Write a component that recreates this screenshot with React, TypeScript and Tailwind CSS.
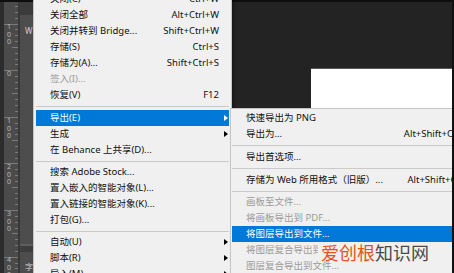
import React from 'react';
import clsx from 'clsx';

type Item =
  | { sep: number }
  | { label: string; keys?: string; arrow?: boolean; disabled?: boolean; active?: boolean };

const fileMenu: Item[] = [
  { label: '关闭(C)', keys: 'Ctrl+W' },
  { label: '关闭全部', keys: 'Alt+Ctrl+W' },
  { label: '关闭并转到 Bridge...', keys: 'Shift+Ctrl+W' },
  { label: '存储(S)', keys: 'Ctrl+S' },
  { label: '存储为(A)...', keys: 'Shift+Ctrl+S' },
  { label: '签入(I)...', disabled: true },
  { label: '恢复(V)', keys: 'F12' },
  { sep: 7 },
  { label: '导出(E)', arrow: true, active: true },
  { label: '生成', arrow: true },
  { label: '在 Behance 上共享(D)...' },
  { sep: 6 },
  { label: '搜索 Adobe Stock...' },
  { label: '置入嵌入的智能对象(L)...' },
  { label: '置入链接的智能对象(K)...' },
  { label: '打包(G)...' },
  { sep: 6 },
  { label: '自动(U)', arrow: true },
  { label: '脚本(R)', arrow: true },
  { label: '导入(M)', arrow: true },
];

const exportMenu: Item[] = [
  { label: '快速导出为 PNG' },
  { label: '导出为...', keys: 'Alt+Shift+Ctrl+W' },
  { sep: 7 },
  { label: '导出首选项...' },
  { sep: 7 },
  { label: '存储为 Web 所用格式（旧版）...', keys: 'Alt+Shift+Ctrl+S' },
  { sep: 6 },
  { label: '画板至文件...', disabled: true },
  { label: '将画板导出到 PDF...', disabled: true },
  { label: '将图层导出到文件...', active: true },
  { label: '将图层复合导出到 PDF...', disabled: true },
  { label: '图层复合导出到文件...', disabled: true },
];

const Arrow = ({ white }: { white?: boolean }) => (
  <span
    className={clsx(
      'h-0 w-0 border-y-[3px] border-l-[4px] border-y-transparent',
      white ? 'border-l-white' : 'border-l-black'
    )}
  />
);

const MenuRows = ({ items, sub }: { items: Item[]; sub?: boolean }) => (
  <>
    {items.map((it, i) =>
      'sep' in it ? (
        <div key={i} className={clsx('flex items-center', it.sep === 7 ? 'h-[7px]' : 'h-[6px]')}>
          <div className={clsx('h-px flex-1 bg-[#cacaca]', sub ? 'mx-px' : 'mx-[2px]')} />
        </div>
      ) : (
        <div
          key={i}
          className={clsx(
            'flex h-[16px] items-center whitespace-nowrap pl-[14px] leading-[16px]',
            sub ? 'mx-px pr-[6px]' : 'mx-[2px]',
            it.active ? 'bg-[#0078d7] text-white' : it.disabled ? 'text-[#9b9b9b]' : 'text-[#111]'
          )}
        >
          <span className="flex-1">{it.label}</span>
          {it.keys && <span>{it.keys}</span>}
          {!sub && (
            <span className="flex w-[10px] justify-end pr-px">
              {it.arrow && <Arrow white={it.active} />}
            </span>
          )}
        </div>
      )
    )}
  </>
);

const rulerMarks = [
  { y: 23, n: '100' },
  { y: 70, n: '0' },
  { y: 117, n: '100' },
  { y: 163, n: '200' },
  { y: 210, n: '300' },
  { y: 256, n: '400' },
];

const Ruler = () => (
  <div className="relative w-[14px] shrink-0 bg-[#4b4b4b]">
    <svg className="absolute inset-0" width="14" height="271">
      {Array.from({ length: 48 }).map((_, i) => {
        const y = 22 - 46.6 * 0.5 + i * 5.83 - 0.5;
        const major = i % 8 === 4;
        const mid = i % 4 === 0;
        return (
          <line
            key={i}
            x1={major ? 0 : mid ? 8 : 11}
            x2={14}
            y1={Math.round(y) + 0.5}
            y2={Math.round(y) + 0.5}
            stroke="#7a7a7a"
            strokeWidth={1}
          />
        );
      })}
    </svg>
    {rulerMarks.map((m) => (
      <div
        key={m.y}
        className="absolute left-[3px] flex flex-col text-[7px] leading-[7.5px] text-[#b9b9b9]"
        style={{ top: m.y - 2 }}
      >
        {m.n.split('').map((c, j) => (
          <span key={j}>{c}</span>
        ))}
      </div>
    ))}
  </div>
);

export default function App() {
  return (
    <div className="relative flex h-[273px] w-[454px] flex-col overflow-hidden bg-[#232323] font-['Noto_Sans','Noto_Sans_CJK_SC',sans-serif] text-[9.5px]">
      <div className="h-[2px] shrink-0 bg-[#0e0e0e]" />
      <div className="flex flex-1">
        <div className="w-[4px] shrink-0 bg-[#2c2c2c]" />
        <Ruler />
        <div className="w-[2px] shrink-0 bg-[#383838]" />
        <div className="flex w-[14px] shrink-0 flex-col bg-[#4d4d4d]">
          <div className="h-[13px] bg-[#3b3b3b]" />
          <div className="flex-1 pl-[5px] pt-[11px] text-[8px] leading-[10px] text-[#cfcfcf]">W</div>
          <div className="h-[2px] bg-[#5e5e5e]" />
          <div className="h-[6px] bg-[#3d3d3d]" />
          <div className="h-[21px] pl-[5px] pt-[10px] text-[8px] leading-[10px] text-[#cfcfcf]">字</div>
        </div>
        <div className="flex flex-1 flex-col">
          <div className="h-[66px] shrink-0" />
          <div className="ml-[277px] h-px bg-[#5a5a5a]" />
          <div className="ml-[277px] flex-1 bg-white" />
        </div>
        <div className="w-[2px] shrink-0 bg-[#111]" />
      </div>

      <div className="absolute left-[33px] top-[-12px] w-[199px] border border-[#c4c4c4] bg-[#f0f0f0] pt-[2px] pb-[2px] shadow-[2px_2px_3px_rgba(0,0,0,0.35)]">
        <MenuRows items={fileMenu} />
      </div>

      <div className="absolute left-[230px] top-[108px] w-[255px] border border-[#c4c4c4] bg-[#f0f0f0] pt-px">
        <MenuRows items={exportMenu} sub />
      </div>

      <div className="absolute right-0 top-0 h-full w-[2px] bg-[#111]" />

      <div className="absolute left-[318px] top-[243px] flex h-[18px] items-center bg-[#f0f0f0] pl-[3px] pr-[2px] font-['Noto_Sans_CJK_SC',sans-serif] text-[18px] leading-[18px]">
        <span className="text-[#e4531b]">爱创根</span>
        <span className="text-[#4a4a4a]">知识网</span>
      </div>
    </div>
  );
}
